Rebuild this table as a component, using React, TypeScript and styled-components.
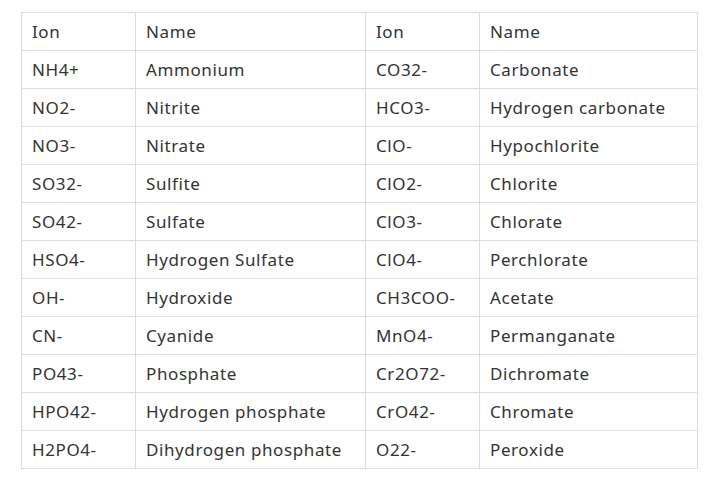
import React from "react";
import styled, { createGlobalStyle } from "styled-components";

const Global = createGlobalStyle`
  html, body { margin: 0; padding: 0; background: #fff; }
`;

const Page = styled.div`
  padding: 12px 0 0 21px;
  font-family: "Noto Sans", "Open Sans", sans-serif;
  color: #333;
`;

const Table = styled.table`
  border-collapse: collapse;
  table-layout: fixed;
  width: 676px;
  font-size: 17px;
  letter-spacing: 0.6px;
`;

const Cell = styled.td<{ $w: number }>`
  width: ${(p) => p.$w}px;
  height: 38px;
  box-sizing: border-box;
  border: 1px solid #dddddd;
  padding: 1px 10px 0 10px;
  vertical-align: middle;
  line-height: 20px;
  white-space: nowrap;
`;

const widths = [114, 230, 114, 218];

const rows: string[][] = [
  ["Ion", "Name", "Ion", "Name"],
  ["NH4+", "Ammonium", "CO32-", "Carbonate"],
  ["NO2-", "Nitrite", "HCO3-", "Hydrogen carbonate"],
  ["NO3-", "Nitrate", "ClO-", "Hypochlorite"],
  ["SO32-", "Sulfite", "ClO2-", "Chlorite"],
  ["SO42-", "Sulfate", "ClO3-", "Chlorate"],
  ["HSO4-", "Hydrogen Sulfate", "ClO4-", "Perchlorate"],
  ["OH-", "Hydroxide", "CH3COO-", "Acetate"],
  ["CN-", "Cyanide", "MnO4-", "Permanganate"],
  ["PO43-", "Phosphate", "Cr2O72-", "Dichromate"],
  ["HPO42-", "Hydrogen phosphate", "CrO42-", "Chromate"],
  ["H2PO4-", "Dihydrogen phosphate", "O22-", "Peroxide"],
];

export default function App() {
  return (
    <Page>
      <Global />
      <Table>
        <tbody>
          {rows.map((r, i) => (
            <tr key={i}>
              {r.map((c, j) => (
                <Cell key={j} $w={widths[j]}>
                  {c}
                </Cell>
              ))}
            </tr>
          ))}
        </tbody>
      </Table>
    </Page>
  );
}
